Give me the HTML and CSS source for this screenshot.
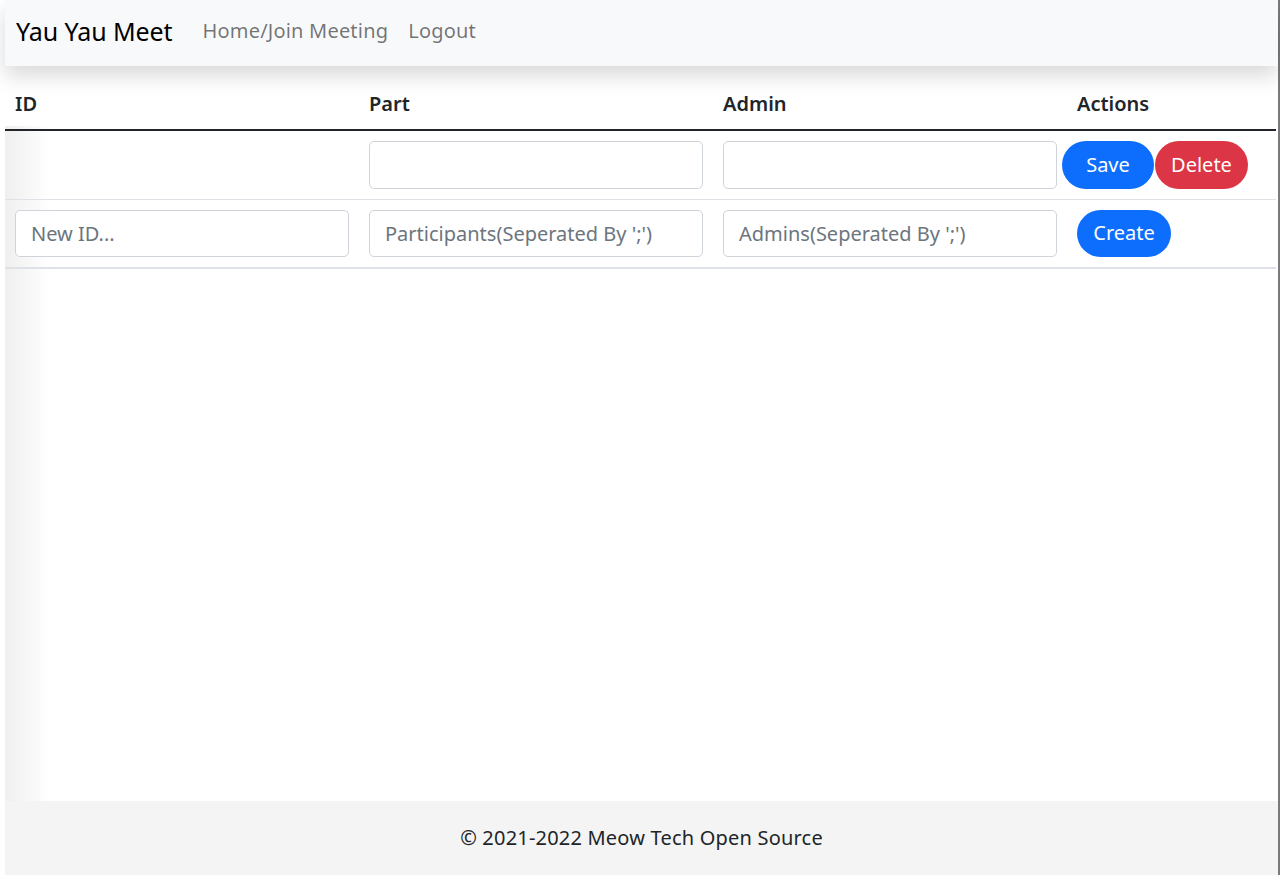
FILE: index.html
```html
<!DOCTYPE html>
<html lang="en">
<head>
<meta charset="utf-8">
<title>Yau Yau Meet</title>
<link rel="stylesheet" href="styles.css">
</head>
<body>
<div class="page">
  <nav class="navbar">
    <a class="brand" href="#">Yau Yau Meet</a>
    <a class="nav-link" href="#">Home/Join Meeting</a>
    <a class="nav-link" href="#">Logout</a>
  </nav>
  <main class="main">
    <table class="meet-table">
      <colgroup>
        <col class="c-id"><col class="c-part"><col class="c-admin"><col class="c-act">
      </colgroup>
      <thead>
        <tr><th>ID</th><th>Part</th><th>Admin</th><th>Actions</th></tr>
      </thead>
      <tbody>
        <tr>
          <td></td>
          <td><input class="form-control" type="text"></td>
          <td><input class="form-control" type="text"></td>
          <td><div class="btn-row shifted"><button class="btn btn-primary btn-save">Save</button><button class="btn btn-danger btn-delete">Delete</button></div></td>
        </tr>
        <tr class="last">
          <td><input class="form-control" type="text" placeholder="New ID..."></td>
          <td><input class="form-control" type="text" placeholder="Participants(Seperated By ';')"></td>
          <td><input class="form-control" type="text" placeholder="Admins(Seperated By ';')"></td>
          <td><div class="btn-row"><button class="btn btn-primary btn-create">Create</button></div></td>
        </tr>
      </tbody>
    </table>
  </main>
  <footer class="footer">© 2021-2022 Meow Tech Open Source</footer>
</div>
</body>
</html>
```
FILE: styles.css
```css
* { box-sizing: border-box; }
html, body { margin: 0; padding: 0; background: #fff; }
body {
  font-family: "Noto Sans", "Open Sans", sans-serif;
  font-size: 20px;
  line-height: 1.5;
  color: #212529;
}
.page {
  margin-left: 5px;
  border-right: 2px solid #7a7a7a;
  min-height: 875px;
  display: flex;
  flex-direction: column;
}
.navbar {
  height: 66px;
  background: #f8f9fa;
  display: flex;
  align-items: center;
  padding-left: 11px;
  padding-bottom: 4px;
  box-shadow: 0 10px 20px rgba(0,0,0,.15);
  position: relative;
  z-index: 1;
}
.brand {
  font-size: 25px;
  color: #000;
  text-decoration: none;
  margin-right: 20px;
  line-height: 1;
  letter-spacing: -0.1px;
}
.nav-link {
  color: rgba(0,0,0,.55);
  text-decoration: none;
  padding: 0 10px;
  letter-spacing: 0.2px;
}
.main {
  flex: 1;
  padding-top: 13px;
  background: linear-gradient(to right, #efefef 0, #ffffff 45px) no-repeat 0 60px / 100% 100%;
}
.meet-table {
  width: calc(100% - 2px);
  border-collapse: collapse;
  table-layout: fixed;
}
.c-id, .c-part, .c-admin { width: 354px; }
.meet-table th {
  text-align: left;
  font-weight: 600;
  padding: 10px;
  border-bottom: 2px solid #212529;
}
.meet-table td {
  padding: 10px;
  border-bottom: 1px solid #dee2e6;
  vertical-align: middle;
}
.meet-table tr.last td { border-bottom: 2px solid #dee2e6; }
.form-control {
  display: block;
  width: 100%;
  height: 47.5px;
  padding: 7px 15px;
  font: inherit;
  font-size: 20px;
  color: #212529;
  background: #fff;
  border: 1px solid #ced4da;
  border-radius: 5px;
}
.form-control::placeholder { color: #6c757d; }
.btn-row { display: flex; gap: 1px; }
.btn-row.shifted { margin-left: -15px; }
.btn {
  height: 47.5px;
  padding: 0;
  font: inherit;
  font-size: 20px;
  color: #fff;
  border: 1px solid transparent;
  border-radius: 50rem;
  cursor: pointer;
  text-align: center;
}
.btn-save { width: 92px; }
.btn-delete { width: 93px; }
.btn-create { width: 94px; }
.btn-primary { background: #0d6efd; }
.btn-danger { background: #dc3545; }
.footer {
  height: 74px;
  background: #f4f4f4;
  display: flex;
  align-items: center;
  justify-content: center;
  letter-spacing: 0.2px;
}
```
